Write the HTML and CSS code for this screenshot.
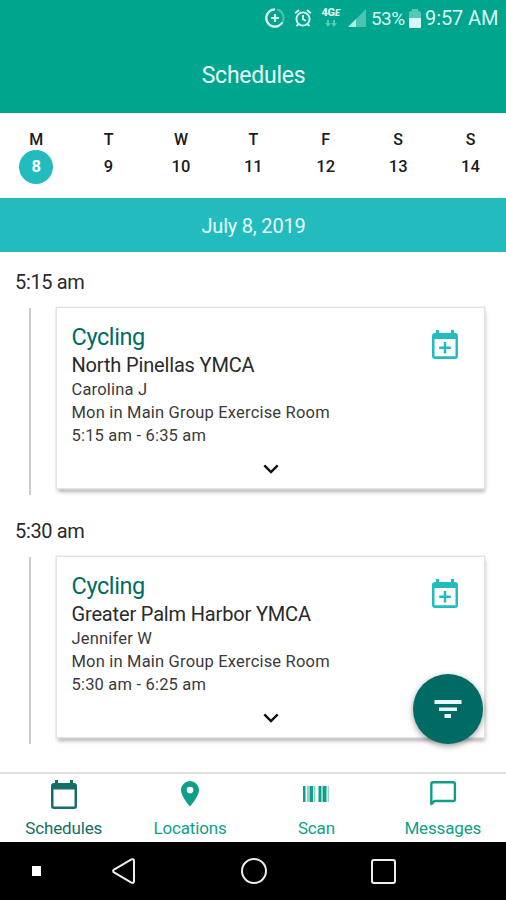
FILE: index.html
```html
<!DOCTYPE html>
<html lang="en">
<head>
<meta charset="utf-8">
<title>Schedules</title>
<link rel="stylesheet" href="styles.css">
</head>
<body>
<div class="app">
  <header class="top">
    <div class="status">
      <svg class="s-sync" width="22" height="22" viewBox="0 0 22 22" fill="none" stroke="currentColor"><path d="M11 2.3a8.7 8.7 0 1 0 7.5 13" stroke-width="2.3"/><path d="M13 2.5a8.7 8.7 0 0 1 5.800 12" stroke-width="2" opacity=".35"/><path d="M11 7v8M7 11h8" stroke-width="2.2"/></svg>
      <svg class="s-alarm" width="18" height="20" viewBox="0 0 18 20" fill="none" stroke="currentColor" stroke-width="1.9"><circle cx="9" cy="11" r="6.6"/><path d="M1.2 5.2L5 2M16.8 5.2L13 2M9 7v4.3l3 1.6M4.5 16l-2 2.2M13.500 16l2 2.200"/></svg>
      <div class="network"><span class="lte">4G<i>E</i></span><svg width="14" height="7" viewBox="0 0 14 7" fill="currentColor"><path d="M3 0h2v3h2L4 7 1 3h2zM9 0h2v3h2l-3 4-3-4h2z"/></svg></div>
      <svg class="s-signal" width="18" height="18" viewBox="0 0 18 18" fill="currentColor"><path d="M0 18L18 0v18z" opacity=".35"/><path d="M0 18l8-8v8z" opacity=".75"/></svg>
      <span class="percent">53%</span>
      <svg class="s-batt" width="12" height="19" viewBox="0 0 12 19" fill="currentColor"><path d="M0 4q0-2 3-2V0h6v2q3 0 3 2v5H0z" opacity=".4"/><path d="M0 9h12v8.500q0 1.500-1.500 1.500h-9Q0 19 0 17.500z"/></svg>
      <span class="clock">9:57 AM</span>
    </div>
    <h1 class="title">Schedules</h1>
  </header>
  <div class="week">
    <div class="day"><span>M</span><b class="on">8</b></div>
    <div class="day"><span>T</span><b>9</b></div>
    <div class="day"><span>W</span><b>10</b></div>
    <div class="day"><span>T</span><b>11</b></div>
    <div class="day"><span>F</span><b>12</b></div>
    <div class="day"><span>S</span><b>13</b></div>
    <div class="day"><span>S</span><b>14</b></div>
  </div>
  <div class="date">July 8, 2019</div>
  <main class="list">
    <section class="slot">
      <h2 class="time">5:15 am</h2>
      <div class="rail">
        <article class="card">
          <div class="row">
            <div class="info">
              <h3 class="name">Cycling</h3>
              <p class="place">North Pinellas YMCA</p>
              <p class="coach">Carolina J</p>
              <p class="room">Mon in Main Group Exercise Room</p>
              <p class="hours">5:15 am - 6:35 am</p>
            </div>
            <svg class="add" width="28" height="30" viewBox="0 0 28 30"><path d="M5 0h3v3h12V0h3v3h1q3 0 3 3v20q0 3-3 3H4q-3 0-3-3V6q0-3 3-3h1zM3.500 9v17.300h21V9z" fill="currentColor" fill-rule="evenodd"/><path d="M14 12v11.500M8.200 17.700h11.600" stroke="currentColor" stroke-width="2.500"/></svg>
          </div>
          <svg class="chev" width="16" height="10" viewBox="0 0 16 10"><path d="M1.300 1.300L8 8l6.700-6.700" fill="none" stroke="#111" stroke-width="2.400"/></svg>
        </article>
      </div>
    </section>
    <section class="slot">
      <h2 class="time">5:30 am</h2>
      <div class="rail">
        <article class="card">
          <div class="row">
            <div class="info">
              <h3 class="name">Cycling</h3>
              <p class="place">Greater Palm Harbor YMCA</p>
              <p class="coach">Jennifer W</p>
              <p class="room">Mon in Main Group Exercise Room</p>
              <p class="hours">5:30 am - 6:25 am</p>
            </div>
            <svg class="add" width="28" height="30" viewBox="0 0 28 30"><path d="M5 0h3v3h12V0h3v3h1q3 0 3 3v20q0 3-3 3H4q-3 0-3-3V6q0-3 3-3h1zM3.500 9v17.300h21V9z" fill="currentColor" fill-rule="evenodd"/><path d="M14 12v11.500M8.200 17.700h11.600" stroke="currentColor" stroke-width="2.500"/></svg>
          </div>
          <svg class="chev" width="16" height="10" viewBox="0 0 16 10"><path d="M1.300 1.300L8 8l6.700-6.700" fill="none" stroke="#111" stroke-width="2.400"/></svg>
        </article>
      </div>
    </section>
    <div class="fab"><svg width="28" height="20" viewBox="0 0 28 20" fill="#e9fbf8"><path d="M0.500 1h27v4H0.500zM5 8.500h18v3.500h-18zM10.500 15h6.500v4h-6.500z"/></svg></div>
  </main>
  <nav class="tabs">
    <div class="tab active"><svg width="28" height="30" viewBox="0 0 28 30"><path d="M5 0h3v3h12V0h3v3h1q3 0 3 3v20q0 3-3 3H4q-3 0-3-3V6q0-3 3-3h1zM3.500 9.500v17h21v-17z" fill="currentColor" fill-rule="evenodd"/></svg><span>Schedules</span></div>
    <div class="tab"><svg width="28" height="30" viewBox="0 0 28 30"><path d="M14 1a9 9 0 0 0-9 9c0 6.500 9 16.500 9 16.500S23 16.500 23 10a9 9 0 0 0-9-9zm0 5.800a3.300 3.300 0 1 1 0 6.600 3.300 3.300 0 0 1 0-6.600z" fill="currentColor"/></svg><span>Locations</span></div>
    <div class="tab"><svg width="28" height="30" viewBox="0 0 28 30" fill="currentColor"><path d="M1 6h2.500v16H1zM7.500 6h3.500v16H7.500zM16.500 6H19v16h-2.500zM21 6h3.500v16H21z"/><path d="M5 6h2v16H5zM11.500 6h2v16h-2zM19 6h2v16h-2zM25.500 6h1.500v16h-1.500z" opacity=".45"/></svg><span>Scan</span></div>
    <div class="tab"><svg width="28" height="30" viewBox="0 0 28 30"><path d="M2.300 24V4q0-1.800 1.800-1.800h20q1.800 0 1.800 1.800v15.200q0 1.800-1.800 1.800H5.500z" fill="none" stroke="currentColor" stroke-width="2.400" stroke-linejoin="round"/></svg><span>Messages</span></div>
  </nav>
  <footer class="keys">
    <i class="dot"></i>
    <svg class="back" width="24" height="26" viewBox="0 0 24 26"><path d="M2 11.600L19 1.700q3-1.500 3 1.300v20q0 2.800-3 1.300L2 14.400q-1.800-1.400 0-2.800z" fill="none" stroke="#eee" stroke-width="2"/></svg>
    <i class="home"></i>
    <i class="recent"></i>
  </footer>
</div>
</body>
</html>
```

FILE: styles.css
```css
* { box-sizing: border-box; }
body { margin: 0; font-family: Roboto, sans-serif; color: #2a2a2a; background: #fff; }
h1, h2, h3, p { margin: 0; font-weight: 400; white-space: nowrap; }
svg { display: block; flex: none; }
.app { width: 506px; height: 900px; display: flex; flex-direction: column; overflow: hidden; }

.top { height: 113px; flex: none; background: #00a58e; color: #d9f8f1; }
.status { height: 36px; display: flex; justify-content: flex-end; align-items: center; padding-right: 8px; white-space: nowrap; }
.s-sync { margin-right: 8px; }
.s-alarm { margin-right: 8px; }
.network { display: flex; flex-direction: column; align-items: center; width: 21px; margin: -2px 7px 0 0; }
.network svg { opacity: .4; margin-top: 2px; }
.lte { font-size: 11px; line-height: 10px; font-weight: 900; letter-spacing: -.2px; }
.lte i { font-size: 9px; }
.s-signal { margin-right: 5px; }
.percent { font-size: 19px; letter-spacing: -.6px; width: 35px; margin-right: 3px; }
.s-batt { margin-right: 4px; }
.clock { font-size: 20px; letter-spacing: -.1px; width: 73px; }
.title { font-size: 23px; line-height: 28px; margin-top: 26px; padding-left: 1px; text-align: center; letter-spacing: -.25px; color: #e6fbf7; }

.week { height: 85px; flex: none; display: grid; grid-template-columns: repeat(7, 72.4px); padding: 17px 0 0; }
.day { display: flex; flex-direction: column; align-items: center; font-size: 16px; font-weight: 500; line-height: 19px; color: #1a1a1a; }
.day b { font-size: 16.500px; font-weight: 500; width: 34px; height: 34px; line-height: 33px; margin-top: 1px; text-align: center; letter-spacing: .1px; }
.day .on { background: #22bcbf; color: #fff; border-radius: 50%; font-weight: 700; }

.date { height: 54px; flex: none; background: #22bcbf; color: #e9fcfc; font-size: 20px; line-height: 56px; padding-left: 1px; text-align: center; letter-spacing: -.2px; }

.list { height: 520px; flex: none; position: relative; padding-top: 18px; }
.slot { height: 249px; }
.time { font-size: 20px; line-height: 24px; padding-left: 15px; letter-spacing: -.35px; }
.rail { margin: 14px 22px 0 29px; height: 187px; border-left: 2px solid #ccc; padding-left: 26px; }
.card { height: 180px; background: #fff; box-shadow: 0 0 0 1.500px #e3e3e3, 1px 4px 4px rgba(0, 0, 0, .3); padding: 14px 25px 0 14.500px; }
.row { display: flex; justify-content: space-between; height: 142px; }
.name { font-size: 23.500px; line-height: 30px; letter-spacing: -.4px; color: #006b65; }
.place { font-size: 20px; line-height: 26px; letter-spacing: -.16px; }
.coach, .room, .hours { font-size: 16.500px; line-height: 23px; letter-spacing: .19px; color: #3a3a3a; }
.add { color: #22bcbf; margin-top: 8px; }
.chev { margin-left: 191px; }
.fab { position: absolute; left: 413px; top: 422px; width: 70px; height: 70px; border-radius: 50%; background: #006b65; display: flex; align-items: center; justify-content: center; box-shadow: 0 2px 6px rgba(0, 0, 0, .4); }

.tabs { height: 70px; flex: none; border-top: 2px solid #e0e0e0; display: grid; grid-template-columns: repeat(4, 1fr); padding-left: .5px; }
.tab { display: flex; flex-direction: column; align-items: center; padding-top: 6px; color: #0f9f89; font-size: 17px; line-height: 20px; letter-spacing: -.15px; }
.tab span { margin-top: 8px; }
.active { color: #146e67; }

.keys { height: 58px; flex: none; background: #000; display: flex; align-items: center; padding-left: 32px; }
.dot { width: 9px; height: 10px; background: #fff; }
.back { margin-left: 71px; }
.home { width: 26px; height: 26px; border: 2px solid #eee; border-radius: 50%; margin-left: 105px; }
.recent { width: 25px; height: 25px; border: 2px solid #eee; border-radius: 3px; margin-left: 104px; }
```
